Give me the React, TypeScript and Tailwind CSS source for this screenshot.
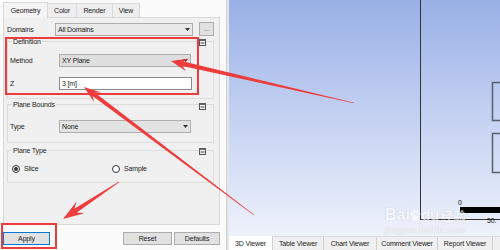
import React from 'react';

type P = [number, number];

function arrowPoints(tip: P, tail: P, hl: number, hw: number, sw: number, tw: number) {
  const dx = tail[0] - tip[0];
  const dy = tail[1] - tip[1];
  const L = Math.hypot(dx, dy);
  const ux = dx / L;
  const uy = dy / L;
  const nx = -uy;
  const ny = ux;
  const bx = tip[0] + ux * hl;
  const by = tip[1] + uy * hl;
  const kx = tip[0] + ux * hl * 0.72;
  const ky = tip[1] + uy * hl * 0.72;
  const pts: P[] = [
    tip,
    [bx + (nx * hw) / 2, by + (ny * hw) / 2],
    [kx + (nx * sw) / 2, ky + (ny * sw) / 2],
    [tail[0] + (nx * tw) / 2, tail[1] + (ny * tw) / 2],
    [tail[0] - (nx * tw) / 2, tail[1] - (ny * tw) / 2],
    [kx - (nx * sw) / 2, ky - (ny * sw) / 2],
    [bx - (nx * hw) / 2, by - (ny * hw) / 2],
  ];
  return pts.map((p) => `${p[0].toFixed(2)},${p[1].toFixed(2)}`).join(' ');
}

function Caret() {
  return (
    <svg width="5" height="3" viewBox="0 0 5 3" className="shrink-0">
      <polygon points="0,0 5,0 2.5,3" fill="#333" />
    </svg>
  );
}

function Collapse() {
  return (
    <svg width="7" height="7" viewBox="0 0 7 7">
      <rect x="0.5" y="0.5" width="6" height="6" fill="#f4f4f4" stroke="#555" />
      <rect x="0.5" y="0.5" width="6" height="1.5" fill="#666" />
      <line x1="1.5" y1="4" x2="5.5" y2="4" stroke="#444" />
    </svg>
  );
}

function Select({ label, w, bg }: { label: string; w: string; bg: string }) {
  return (
    <div
      className={`flex h-[13px] items-center justify-between border border-[#adadad] pl-[2px] pr-[2px] ${w} ${bg}`}
    >
      <span>{label}</span>
      <Caret />
    </div>
  );
}

function Group({
  title,
  children,
  iconTop,
  className,
}: {
  title: string;
  children: React.ReactNode;
  iconTop: string;
  className: string;
}) {
  return (
    <div className={`relative ml-[3px] w-[207px] ${className}`}>
      <fieldset className="border border-[#dcdcdc]">
        <legend className="ml-[4px] px-[1px] leading-[7px]">{title}</legend>
        {children}
      </fieldset>
      <div className={`absolute right-[8px] ${iconTop}`}>
        <Collapse />
      </div>
    </div>
  );
}

export default function App() {
  const red = '#ee3b3b';
  return (
    <div className="relative flex h-[250px] w-[500px] overflow-hidden bg-white font-['Liberation_Sans',Arial,sans-serif] text-[7px] leading-none tracking-[-0.15px] text-[#1b1b1b]">
      {/* Left side panel */}
      <div className="flex w-[226px] shrink-0 flex-col bg-[#fbfbfb] pl-[3px] pt-[2px]">
        {/* tabs */}
        <div className="relative z-10 -mb-px flex h-[16px] items-stretch">
          <div className="flex w-[45px] items-center justify-center border-x border-t border-[#d9d9d9] bg-[#f4f4f4]">
            Geometry
          </div>
          <div className="mt-[1px] flex w-[29px] items-center justify-center border-r border-t border-b border-[#d9d9d9] bg-[#eeeeee]">
            Color
          </div>
          <div className="mt-[1px] flex w-[36px] items-center justify-center border-r border-t border-b border-[#d9d9d9] bg-[#eeeeee]">
            Render
          </div>
          <div className="mt-[1px] flex w-[27px] items-center justify-center border-r border-t border-b border-[#d9d9d9] bg-[#eeeeee]">
            View
          </div>
        </div>
        {/* content panel */}
        <div className="flex h-[208px] w-[217px] flex-col border border-[#d9d9d9] bg-[#f0f0f0]">
          <div className="mt-[4px] flex h-[14px] items-center pl-[3px]">
            <span className="w-[48px]">Domains</span>
            <Select label="All Domains" w="w-[138px]" bg="bg-[#e9e9e9]" />
            <div className="ml-[6px] flex h-[14px] w-[15px] items-end justify-center border border-[#adadad] bg-[#e1e1e1] pb-[3px] text-[6px]">
              ...
            </div>
          </div>

          <Group title="Definition" iconTop="top-[1px]" className="mt-[2px]">
            <div className="mt-[9px] flex h-[13px] items-center pl-[2px]">
              <span className="w-[49px]">Method</span>
              <Select label="XY Plane" w="w-[132px]" bg="bg-[#dedede]" />
            </div>
            <div className="mt-[10px] mb-[8px] flex h-[13px] items-center pl-[2px]">
              <span className="w-[49px]">Z</span>
              <div className="flex h-[13px] w-[133px] items-center border border-[#8a8a8a] bg-white pl-[2px]">
                3 [m]
              </div>
            </div>
          </Group>

          <Group title="Plane Bounds" iconTop="top-[2px]" className="mt-[2px]">
            <div className="mt-[12px] mb-[9px] flex h-[13px] items-center pl-[2px]">
              <span className="w-[49px]">Type</span>
              <Select label="None" w="w-[132px]" bg="bg-[#e3e3e3]" />
            </div>
          </Group>

          <Group title="Plane Type" iconTop="top-[1px]" className="mt-[4px]">
            <div className="mt-[10px] mb-[9px] flex h-[9px] items-center pl-[4px]">
              <div className="flex w-[100px] items-center gap-[4px]">
                <span className="flex h-[8px] w-[8px] items-center justify-center rounded-full border border-[#333] bg-white">
                  <span className="h-[4px] w-[4px] rounded-full bg-[#333]" />
                </span>
                <span>Slice</span>
              </div>
              <div className="flex items-center gap-[4px]">
                <span className="h-[8px] w-[8px] rounded-full border border-[#333] bg-white" />
                <span>Sample</span>
              </div>
            </div>
          </Group>
        </div>
        {/* buttons */}
        <div className="mt-[7px] flex h-[13px]">
          <div className="flex w-[47px] items-center justify-center border border-[#0078d7] bg-[#e1e1e1]">
            Apply
          </div>
          <div className="ml-[73px] flex w-[49px] items-center justify-center border border-[#adadad] bg-[#e1e1e1]">
            Reset
          </div>
          <div className="ml-[2px] flex w-[46px] items-center justify-center border border-[#adadad] bg-[#e1e1e1]">
            Defaults
          </div>
        </div>
      </div>

      {/* splitter */}
      <div className="w-[3px] shrink-0 border-l border-[#cfcfcf] bg-[#e6e6e6]" />

      {/* viewer */}
      <div className="flex flex-1 flex-col">
        <div className="relative h-[236px] bg-[linear-gradient(to_bottom,#99b0e6,#c9d5f3_55%,#eef2fb)]">
          <svg className="absolute inset-0" width="271" height="236">
            <line x1="191.5" y1="0" x2="191.5" y2="219.5" stroke="#333" strokeWidth="1" />
            <line x1="191" y1="219.5" x2="271" y2="219.5" stroke="#333" strokeWidth="1" />
            <rect x="263.5" y="82.5" width="20" height="38" fill="none" stroke="#58606e" strokeWidth="1.5" />
            <rect x="263.5" y="133.5" width="20" height="39" fill="none" stroke="#58606e" strokeWidth="1.5" />
            <rect x="231" y="207" width="40" height="6" fill="#000" />
            <text x="229" y="205" fontSize="7" fill="#111" fontFamily="Liberation Sans, Arial, sans-serif">
              0
            </text>
            <text x="258" y="223" fontSize="7" fill="#111" fontFamily="Liberation Sans, Arial, sans-serif">
              50.
            </text>
          </svg>
          {/* watermark */}
          <div className="absolute left-[156px] top-[207px] flex flex-col items-start text-white opacity-60 [text-shadow:0_0_1px_rgba(80,80,80,0.5)]">
            <div className="flex h-[16px] items-end">
              <span className="text-[16px] font-bold leading-[16px] tracking-[0px]">Bai</span>
              <svg width="11" height="13" viewBox="0 0 13 16" className="mb-[1px]">
                <ellipse cx="6.5" cy="11" rx="4" ry="3.5" fill="white" />
                <circle cx="2" cy="6" r="1.8" fill="white" />
                <circle cx="5" cy="3" r="1.8" fill="white" />
                <circle cx="8.5" cy="3" r="1.8" fill="white" />
                <circle cx="11" cy="6" r="1.8" fill="white" />
              </svg>
              <span className="text-[15px] font-bold leading-[16px] tracking-[0px]">du</span>
              <span className="ml-[1px] font-['Noto_Sans_CJK_SC',sans-serif] text-[13px] font-bold leading-[15px] tracking-[0px]">
                经验
              </span>
            </div>
            <span className="mt-[2px] text-[9.5px] leading-[10px] tracking-[0.2px]">jingyan.baidu.com</span>
          </div>
        </div>
        <div className="flex h-[14px] border-t border-[#d9d9d9] bg-[#f0f0f0]">
          <div className="-mt-px flex w-[44px] items-center justify-center border-r border-[#d0d0d0] bg-white">3D Viewer</div>
          <div className="flex w-[51px] items-center justify-center border-r border-[#d0d0d0]">Table Viewer</div>
          <div className="flex w-[53px] items-center justify-center border-r border-[#d0d0d0]">Chart Viewer</div>
          <div className="flex w-[61px] items-center justify-center border-r border-[#d0d0d0]">Comment Viewer</div>
          <div className="flex w-[55px] items-center justify-center border-r border-[#d0d0d0]">Report Viewer</div>
        </div>
      </div>

      {/* annotations */}
      <svg className="pointer-events-none absolute inset-0" width="500" height="250">
        <rect x="6" y="38" width="192" height="56" fill="none" stroke={red} strokeWidth="2" />
        <rect x="2" y="224" width="54" height="24" fill="none" stroke={red} strokeWidth="2" />
        <polygon points={arrowPoints([171, 61], [354, 103], 17, 13, 4.5, 0.5)} fill={red} />
        <polygon points={arrowPoints([84, 87], [254, 215], 17, 12, 4, 0.5)} fill={red} />
        <polygon points={arrowPoints([63, 219], [119, 182], 21, 14, 4.5, 0.8)} fill={red} />
      </svg>
    </div>
  );
}
